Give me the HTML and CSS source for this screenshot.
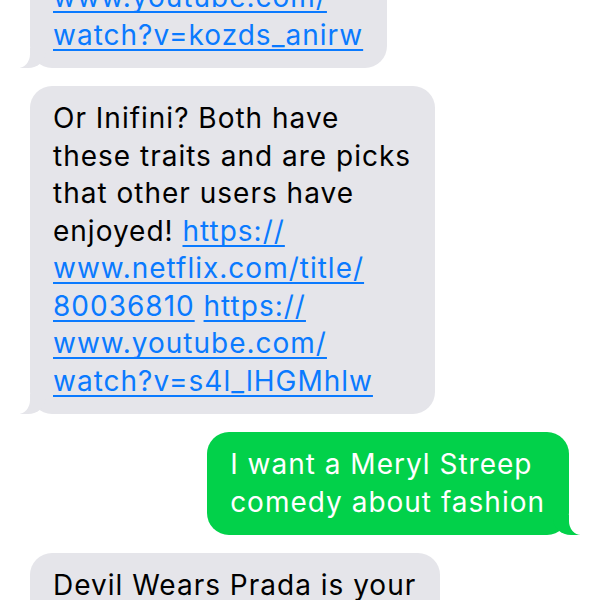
FILE: index.html
```html
<!DOCTYPE html>
<html>
<head>
<meta charset="utf-8">
<link rel="stylesheet" href="styles.css">
</head>
<body>
<div class="thread">
  <div class="msg them"><a href="#">www.youtube.com/</a><br><a href="#">watch?v=kozds_anirw</a></div>
  <div class="msg them">Or Inifini? Both have<br>these traits and are picks<br>that other users have<br>enjoyed! <a href="#">https://</a><br><a href="#">www.netflix.com/title/</a><br><a href="#">80036810</a> <a href="#">https://</a><br><a href="#">www.youtube.com/</a><br><a href="#">watch?v=s4l_lHGMhlw</a></div>
  <div class="msg me">I want a Meryl Streep<br>comedy about fashion</div>
  <div class="msg them">Devil Wears Prada is your<br>best pick!</div>
</div>
</body>
</html>
```

FILE: styles.css
```css
html, body {
  margin: 0;
  padding: 0;
  background: #ffffff;
  overflow: hidden;
}

.thread {
  display: flex;
  flex-direction: column;
  gap: 18px;
  margin-top: -35px;
  padding: 0 31px 0 30px;
}

.msg {
  position: relative;
  width: fit-content;
  padding: 14px 24px 14px 23px;
  border-radius: 22px;
  font-family: Inter, "Open Sans", sans-serif;
  font-size: 28px;
  letter-spacing: 1px;
  line-height: 37.5px;
  white-space: nowrap;
}

.msg a {
  color: #0a7aff;
  text-decoration: underline;
  text-decoration-thickness: 1.5px;
  text-underline-offset: 4px;
  text-decoration-skip-ink: none;
}

.them {
  align-self: flex-start;
  background: #e5e5ea;
  color: #000;
}

.me {
  align-self: flex-end;
  background: #02d14a;
  color: #fff;
}

.them::before,
.them::after,
.me::before,
.me::after {
  content: "";
  position: absolute;
  bottom: 0;
  height: 20px;
}

.them::before {
  left: -10px;
  width: 26px;
  background: #e5e5ea;
  border-bottom-right-radius: 18px 16px;
}

.them::after {
  left: -30px;
  width: 30px;
  background: #ffffff;
  border-bottom-right-radius: 12px 14px;
}

.me::before {
  right: -11px;
  width: 27px;
  background: #02d14a;
  border-bottom-left-radius: 18px 16px;
}

.me::after {
  right: -30px;
  width: 30px;
  background: #ffffff;
  border-bottom-left-radius: 12px 14px;
}
```
